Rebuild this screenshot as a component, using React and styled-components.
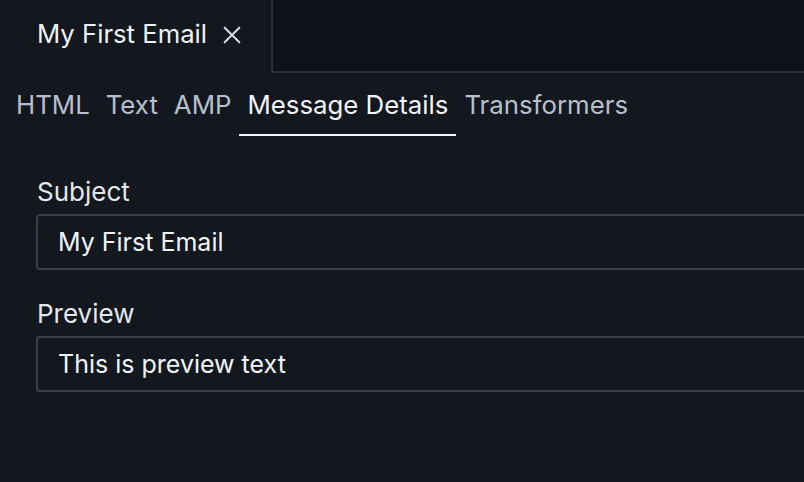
import React from "react";
import styled, { createGlobalStyle } from "styled-components";

const GlobalStyle = createGlobalStyle`
  html, body {
    margin: 0;
    padding: 0;
    background: #13171e;
    font-family: Inter, "Noto Sans", sans-serif;
    overflow: hidden;
  }
`;

const Page = styled.div`
  width: 804px;
  height: 482px;
  background: #13171e;
  display: flex;
  flex-direction: column;
`;

const TabBar = styled.div`
  display: flex;
  height: 73px;
  background: #0e1118;
`;

const FileTab = styled.div`
  width: 273px;
  box-sizing: border-box;
  background: #13171e;
  border-right: 2px solid #2c313b;
  display: flex;
  align-items: center;
  padding-left: 37px;
  padding-bottom: 6px;
  gap: 14px;
  color: #eef1f6;
  font-size: 25.7px;
`;

const CloseIcon = styled.svg`
  width: 22px;
  height: 22px;
  margin-top: 2px;
`;

const TabFiller = styled.div`
  flex: 1;
  border-bottom: 2px solid #2c313b;
`;

const ViewTabs = styled.div`
  display: flex;
  padding-left: 8px;
  height: 63px;
`;

const ViewTab = styled.div`
  padding: 16px 8px 0;
  box-sizing: border-box;
  font-size: 25.8px;
  color: ${(p) => (p.$active ? "#f2f4f8" : "#b6c0ce")};
  border-bottom: 2px solid ${(p) => (p.$active ? "#f2f4f8" : "transparent")};
  height: 63px;
`;

const Form = styled.div`
  display: flex;
  flex-direction: column;
  padding: 40px 0 0 36px;
  gap: 28px;
`;

const Field = styled.div`
  display: flex;
  flex-direction: column;
  gap: 6px;
`;

const Label = styled.label`
  font-size: 26px;
  color: #e3e7ee;
  padding-left: 1px;
  line-height: 32px;
`;

const Input = styled.div`
  height: 56px;
  box-sizing: border-box;
  border: 2px solid #3a3f49;
  border-right: none;
  border-radius: 4px 0 0 4px;
  display: flex;
  align-items: center;
  padding-left: 20px;
  font-size: 25px;
  color: #f2f4f8;
`;

const tabs = ["HTML", "Text", "AMP", "Message Details", "Transformers"];

export default function App() {
  return (
    <Page>
      <GlobalStyle />
      <TabBar>
        <FileTab>
          My First Email
          <CloseIcon viewBox="0 0 24 24" fill="none" stroke="#d5dce6" strokeWidth="2.2" strokeLinecap="round">
            <path d="M4 4 L20 20 M20 4 L4 20" />
          </CloseIcon>
        </FileTab>
        <TabFiller />
      </TabBar>
      <ViewTabs>
        {tabs.map((t) => (
          <ViewTab key={t} $active={t === "Message Details"}>
            {t}
          </ViewTab>
        ))}
      </ViewTabs>
      <Form>
        <Field>
          <Label>Subject</Label>
          <Input>My First Email</Input>
        </Field>
        <Field>
          <Label>Preview</Label>
          <Input>This is preview text</Input>
        </Field>
      </Form>
    </Page>
  );
}
